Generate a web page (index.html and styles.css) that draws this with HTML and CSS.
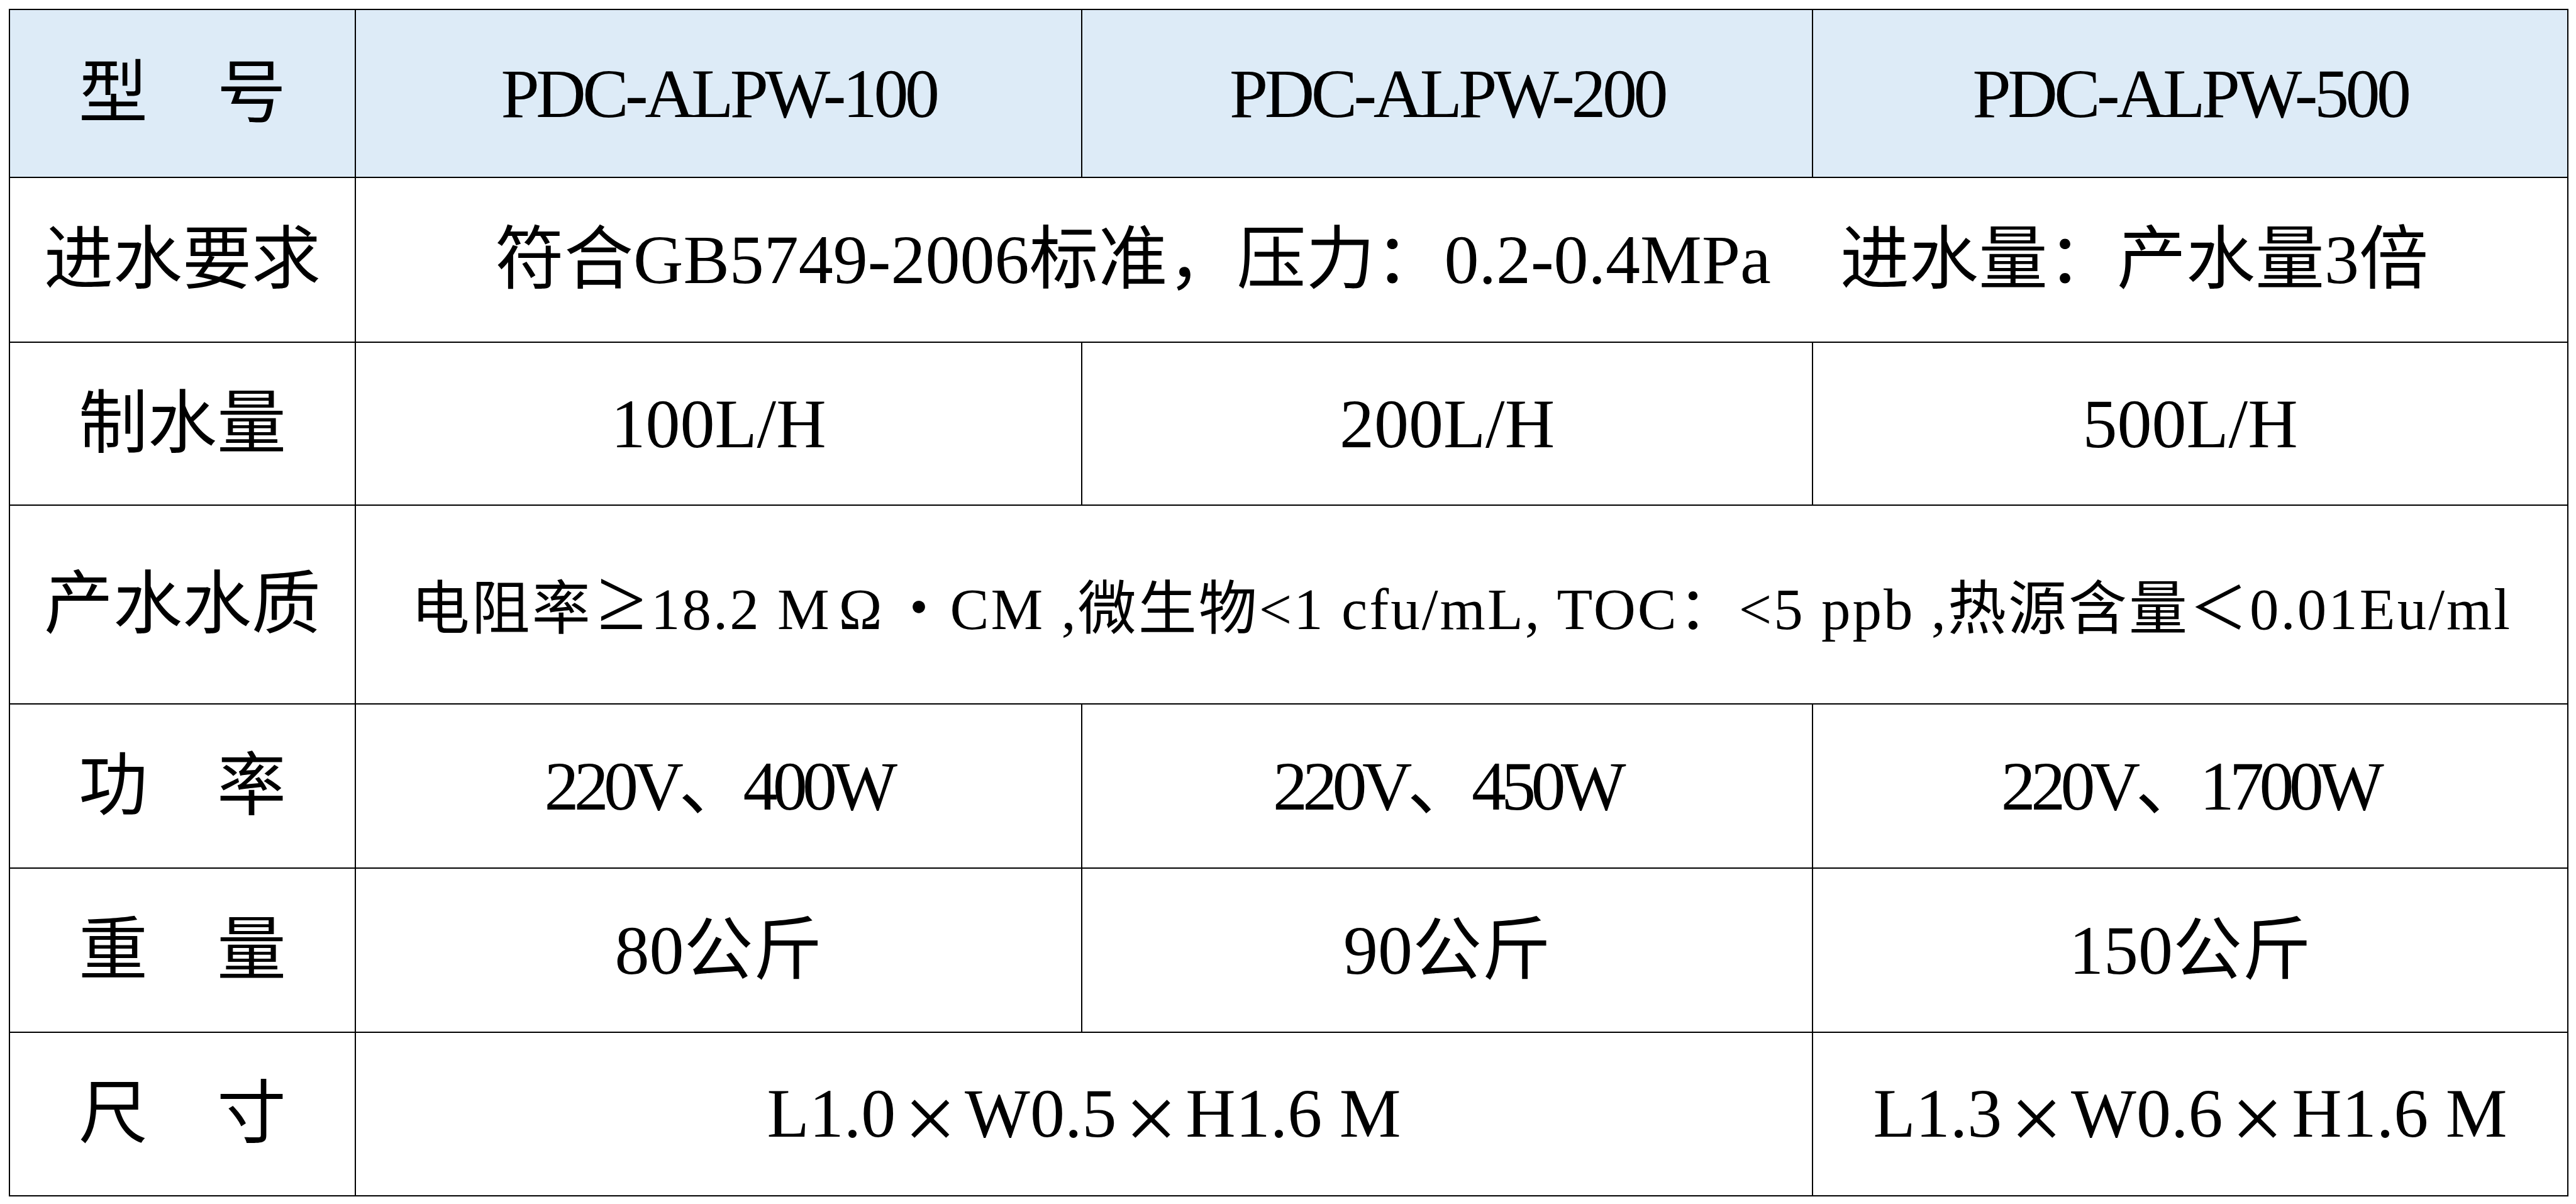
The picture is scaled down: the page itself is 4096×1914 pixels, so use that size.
FILE: index.html
```html
<!DOCTYPE html>
<html lang="zh-CN">
<head>
<meta charset="utf-8">
<title>PDC-ALPW 参数表</title>
<link rel="stylesheet" href="styles.css">
</head>
<body>
<div class="page">
  <table class="spec">
    <colgroup>
      <col class="c-label">
      <col class="c-a">
      <col class="c-b">
      <col class="c-c">
    </colgroup>
    <tbody>
      <tr class="row-head">
        <th class="cell label">型　号</th>
        <th class="cell lat">PDC-ALPW-100</th>
        <th class="cell lat">PDC-ALPW-200</th>
        <th class="cell lat">PDC-ALPW-500</th>
      </tr>
      <tr class="row-in">
        <td class="cell label">进水要求</td>
        <td class="cell" colspan="3">符合GB5749-2006标准，压力：0.2-0.4MPa　进水量：产水量3倍</td>
      </tr>
      <tr class="row-prod">
        <td class="cell label">制水量</td>
        <td class="cell">100L/H</td>
        <td class="cell">200L/H</td>
        <td class="cell">500L/H</td>
      </tr>
      <tr class="row-quality">
        <td class="cell label">产水水质</td>
        <td class="cell small" colspan="3">电阻率<span class="geq">≥</span>18.2 M<span class="wide">Ω</span>・CM ,微生物&lt;1 cfu/mL, TOC：&lt;5 ppb ,热源含量＜0.01Eu/ml</td>
      </tr>
      <tr class="row-power">
        <td class="cell label">功　率</td>
        <td class="cell tight">220V、400W</td>
        <td class="cell tight">220V、450W</td>
        <td class="cell tight">220V、1700W</td>
      </tr>
      <tr class="row-weight">
        <td class="cell label">重　量</td>
        <td class="cell">80公斤</td>
        <td class="cell">90公斤</td>
        <td class="cell">150公斤</td>
      </tr>
      <tr class="row-size">
        <td class="cell label">尺　寸</td>
        <td class="cell" colspan="2">L1.0<span class="times">×</span>W0.5<span class="times">×</span>H1.6 M</td>
        <td class="cell">L1.3<span class="times">×</span>W0.6<span class="times">×</span>H1.6 M</td>
      </tr>
    </tbody>
  </table>
</div>
</body>
</html>
```

FILE: styles.css
```css
html, body {
  margin: 0;
  padding: 0;
  background: #ffffff;
}

.page {
  padding: 14px 0 0 14px;
}

.spec {
  border-collapse: collapse;
  table-layout: fixed;
  width: 4068px;
  font-family: "Liberation Serif", "Noto Sans CJK SC", serif;
  font-size: 110px;
  font-weight: 400;
  color: #000000;
}

.c-label { width: 550px; }
.c-a { width: 1155px; }
.c-b { width: 1162px; }
.c-c { width: 1201px; }

.cell {
  border: 2px solid #000000;
  padding: 0;
  text-align: center;
  vertical-align: middle;
  white-space: nowrap;
  line-height: 1.2;
  font-weight: 400;
}

.row-head .cell {
  background: #ddebf7;
}

.lat {
  letter-spacing: -0.05em;
}

.tight {
  letter-spacing: -0.07em;
}

.small {
  font-size: 93px;
  letter-spacing: 3px;
}

.wide {
  display: inline-block;
  width: 1em;
  text-align: center;
  letter-spacing: 0;
}

.geq {
  display: inline-block;
  font-size: 1.5em;
  width: 0.667em;
  line-height: 0.8;
  text-align: center;
  letter-spacing: 0;
}

.times {
  display: inline-block;
  font-size: 1.35em;
  width: 0.74em;
  line-height: 0.8;
  text-align: center;
  letter-spacing: 0;
  vertical-align: -0.14em;
}

.row-head { height: 267px; }
.row-in { height: 262px; }
.row-prod { height: 259px; }
.row-quality { height: 316px; }
.row-power { height: 261px; }
.row-weight { height: 261px; }
.row-size { height: 260px; }
```
